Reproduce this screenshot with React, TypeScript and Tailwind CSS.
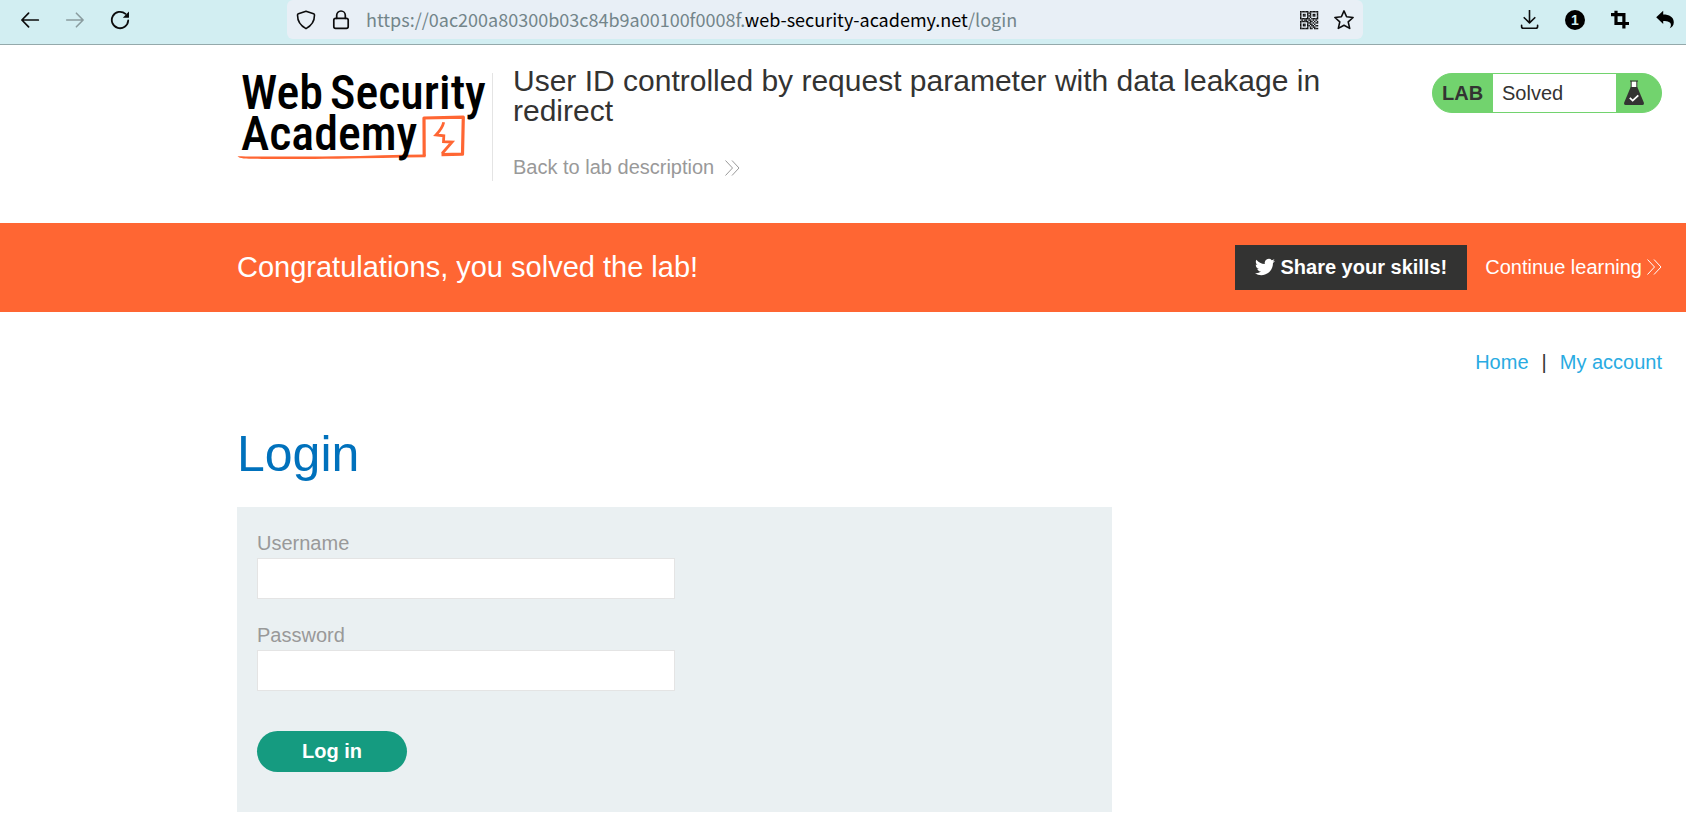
import React from "react";

const stroke = {
  fill: "none",
  stroke: "currentColor",
  strokeLinecap: "round" as const,
  strokeLinejoin: "round" as const,
};

function IconButton({ label, className = "", children }: { label: string; className?: string; children: React.ReactNode }) {
  return (
    <button type="button" aria-label={label} className={`block size-5 shrink-0 ${className}`}>
      <svg viewBox="0 0 20 20" className="size-5" aria-hidden="true">
        {children}
      </svg>
    </button>
  );
}

const QR = [
  "1111110111111",
  "1000011100001",
  "1011010101101",
  "1011011101101",
  "1000010100001",
  "1111111011111",
  "0101101101010",
  "1111110110101",
  "1000011101011",
  "1011010110100",
  "1011011011011",
  "1000010101100",
  "1111110110111",
];

function BrowserBar() {
  return (
    <div className="flex h-[45px] items-start border-b border-[#94a9ab] bg-[#d2eef2] text-[#0c0c0d]">
      <nav aria-label="History" className="flex h-[39px] items-center gap-[25px] pl-5">
        <IconButton label="Back">
          <path {...stroke} strokeWidth="1.7" d="M18.3 10H2M8.6 3.2 1.9 10l6.7 6.8" />
        </IconButton>
        <IconButton label="Forward" className="text-[#8a9c9f]">
          <path {...stroke} strokeWidth="1.6" d="M1.7 10H18M11.4 3.2l6.7 6.8-6.7 6.8" />
        </IconButton>
        <IconButton label="Reload">
          <path {...stroke} strokeWidth="1.8" d="M18.2 10.500a8.200 8.200 0 1 1-2.700-6.600" />
          <path fill="currentColor" d="M19 1.600v5.600q0 .6-.6.6h-5.600z" />
        </IconButton>
      </nav>
      <div className="ml-[157px] flex h-[39px] min-w-0 flex-1 items-center gap-[15px] rounded-md bg-[#e8eff6] px-[9px]">
        <IconButton label="Tracking protection">
          <path {...stroke} strokeWidth="1.6" d="M10 1.200 17.600 3.800q.9.300.9 1.300C18.500 11 15.500 15.800 10 18.600 4.500 15.800 1.500 11 1.500 5.100q0-1 .9-1.300z" />
        </IconButton>
        <IconButton label="Connection secure">
          <rect {...stroke} strokeWidth="1.7" x="2.800" y="8.300" width="14.400" height="10" rx="1.800" />
          <path {...stroke} strokeWidth="1.7" d="M5.700 8.300V5.300a4.300 4.300 0 0 1 8.600 0v3" />
        </IconButton>
        <div className="min-w-0 flex-1 truncate pb-0.5 font-['Noto_Sans_CJK_SC','Noto_Sans',sans-serif] text-[18px] leading-6 text-[#73858a]">
          https://0ac200a80300b03c84b9a00100f0008f.<span className="text-black">web-security-academy.net</span>/login
        </div>
        <IconButton label="QR code">
          {QR.map((row, y) =>
            row.split("").map((c, x) =>
              c === "1" ? <rect key={`${x}-${y}`} x={1 + x * 1.4} y={1 + y * 1.4} width="1.45" height="1.45" fill="#111" /> : null,
            ),
          )}
        </IconButton>
        <IconButton label="Bookmark this page">
          <path {...stroke} strokeWidth="1.6" d="m10 .9 2.600 5.900 6.500.7-4.900 4.400 1.500 6.500L10 15.200l-5.700 3.200 1.500-6.500L.9 7.500l6.500-.7z" />
        </IconButton>
      </div>
      <div className="flex h-[39px] items-center gap-[25px] pl-[157px] pr-[11px]">
        <IconButton label="Downloads">
          <path {...stroke} strokeWidth="1.6" d="M9.500 .4v12.400M4.200 7.700l5.300 5.200 5.300-5.200M1.600 15.300v1.200q0 1.800 1.800 1.800h12.400q1.800 0 1.800-1.800v-1.200" />
        </IconButton>
        <button type="button" aria-label="Notifications" className="flex size-5 items-center justify-center rounded-full bg-black font-['Liberation_Sans',sans-serif] text-[14px] font-bold leading-5 text-[#d2eef2]">
          1
        </button>
        <IconButton label="Crop">
          <path fill="none" stroke="#000" strokeWidth="3.2" d="M6 .8v12.700h13M1 4.600h12.900v14" />
        </IconButton>
        <IconButton label="Undo">
          <path fill="#000" d="M1.200 7.300 8.200.8v3.700c6 0 10.600 2.500 10.600 7.800 0 3.200-1.900 5.200-4.600 6.300 1-1 1.700-2.200 1.700-3.700 0-3-2.800-4-7.700-4v3.200z" />
        </IconButton>
      </div>
    </div>
  );
}

function Logo() {
  return (
    <svg viewBox="0 0 255 92" className="h-[92px] w-[255px] shrink-0 overflow-visible" role="img" aria-label="Web Security Academy">
      <g fill="none" stroke="#ff6633" strokeLinejoin="round">
        <path strokeWidth="3.200" d="M187.200 86 187 48l39.300-.8-.8 37-21 .5" />
        <path strokeWidth="2.800" strokeLinejoin="miter" d="M206.700 52.300Q205.500 58 199 65l7.800.8-.3 5.800 8.600.4-10 11.500" />
      </g>
      <path fill="#ff6633" d="M.5 86.300c20 .4 60 .4 100 0 30-.5 60-1.900 88.100-1.900v2.900c-28 .1-58 1.100-88 1.500-40 .4-80 .3-94-.4-3-.2-5-.9-6.100-2.100z" />
      <g fill="#000" className="font-['Roboto_Condensed','Liberation_Sans_Narrow',sans-serif] text-[48px] font-medium">
        <text x="4" y="39">Web</text>
        <text x="93" y="39">Security</text>
        <text x="4" y="80">Academy</text>
      </g>
    </svg>
  );
}

function Chevrons() {
  return (
    <svg viewBox="0 0 15 16" className="h-4 w-[15px] shrink-0" aria-hidden="true">
      <path fill="none" stroke="currentColor" strokeWidth="1" d="m.5.5 7 7.500-7 7.500M7 .5l7 7.500-7 7.500" />
    </svg>
  );
}

function LabStatus() {
  return (
    <div className="flex h-10 w-[230px] shrink-0 items-stretch rounded-full border border-[#72d36e] bg-[#72d36e] text-xl leading-[38px]">
      <span className="w-[60px] pl-[9px] font-bold">LAB</span>
      <span className="flex-1 bg-white pl-[9px]">Solved</span>
      <span className="flex w-[45px] items-center pl-2">
        <svg viewBox="0 0 20 26" className="h-[26px] w-5" aria-hidden="true">
          <path fill="#fff" d="M7 1.500h6v6H7z" />
          <path fill="none" stroke="#333332" d="M6 1h8M7.200 1v6.500M12.800 1v6.500" />
          <path fill="#333332" d="M6.700 7h6.600l6.500 15.500q.5 2.500-1.500 2.500H1.700q-2 0-1.500-2.500z" />
          <path fill="none" stroke="#fff" strokeWidth="1.800" d="m5.800 17.800 2.900 2.800 5.600-5.200" />
        </svg>
      </span>
    </div>
  );
}

function Field({ id, label, type }: { id: string; label: string; type: string }) {
  return (
    <div>
      <label htmlFor={id} className="block text-xl leading-[30px] text-[#999]">
        {label}
      </label>
      <input id={id} name={id} type={type} className="block h-[41px] w-[418px] max-w-full border border-[#e4e4e4] bg-white px-2 text-xl outline-none" />
    </div>
  );
}

export default function App() {
  return (
    <div className="min-h-screen bg-white font-['Liberation_Sans',Arial,sans-serif] text-[#333332]">
      <BrowserBar />
      <header className="flex h-[178px] items-start pl-[237px] pr-6 pt-[25px]">
        <Logo />
        <div className="mt-[3px] h-[108px] w-px shrink-0 bg-[#e4e4e4]" />
        <div className="-mt-1 min-w-0 flex-1 pl-5 pr-20">
          <h1 className="max-w-[840px] text-[30px] leading-[30px]">
            User ID controlled by request parameter with data leakage in redirect
          </h1>
          <a href="#lab" className="mt-[29px] inline-flex items-center gap-[11px] text-xl leading-[25px] text-[#999]">
            Back to lab description
            <Chevrons />
          </a>
        </div>
        <div className="pt-[3px]">
          <LabStatus />
        </div>
      </header>

      <section className="flex h-[89px] items-center bg-[#ff6633] pl-[237px] pr-6 text-white">
        <p className="flex-1 pb-0.5 text-[29px] leading-[34px]">Congratulations, you solved the lab!</p>
        <button type="button" className="flex h-[45px] items-center gap-[5px] bg-[#333332] px-5 pb-0.5 text-xl font-bold">
          <svg viewBox="0 0 24 24" className="size-5" aria-hidden="true">
            <path
              fill="#fff"
              d="M23.950 4.570a10 10 0 0 1-2.820.77 4.960 4.960 0 0 0 2.160-2.720c-.95.560-2 .960-3.130 1.190a4.920 4.920 0 0 0-8.380 4.480C7.690 8.090 4.070 6.130 1.640 3.160a4.820 4.820 0 0 0-.67 2.480c0 1.710.87 3.210 2.190 4.100a4.900 4.900 0 0 1-2.230-.62v.06a4.920 4.920 0 0 0 3.950 4.830 5 5 0 0 1-2.210.08 4.940 4.940 0 0 0 4.600 3.420A9.870 9.870 0 0 1 0 19.540a14 14 0 0 0 7.550 2.210c9.050 0 14-7.500 14-13.980 0-.21 0-.42-.02-.63a9.940 9.940 0 0 0 2.460-2.550z"
            />
          </svg>
          Share your skills!
        </button>
        <a href="#learn" className="ml-[18px] flex items-center gap-[5px] pb-0.5 text-xl">
          Continue learning
          <Chevrons />
        </a>
      </section>

      <main className="pl-[237px] pr-6">
        <nav aria-label="Account" className="flex justify-end gap-[13px] pt-[35px] text-xl leading-[30px]">
          <a href="#home" className="text-[#29abe2]">Home</a>
          <span>|</span>
          <a href="#account" className="text-[#29abe2]">My account</a>
        </nav>
        <h2 className="mt-[46px] text-[50px] leading-[62px] text-[#0071bc]">Login</h2>
        <form className="mt-[22px] max-w-[875px] bg-[#eaf0f2] px-5 pb-10 pt-[21px]" onSubmit={(e) => e.preventDefault()}>
          <div className="flex flex-col gap-[21px]">
            <Field id="username" label="Username" type="text" />
            <Field id="password" label="Password" type="password" />
          </div>
          <button type="submit" className="mt-10 h-[41px] w-[150px] rounded-full bg-[#159b80] pb-0.5 text-xl font-bold text-white">
            Log in
          </button>
        </form>
      </main>
    </div>
  );
}
